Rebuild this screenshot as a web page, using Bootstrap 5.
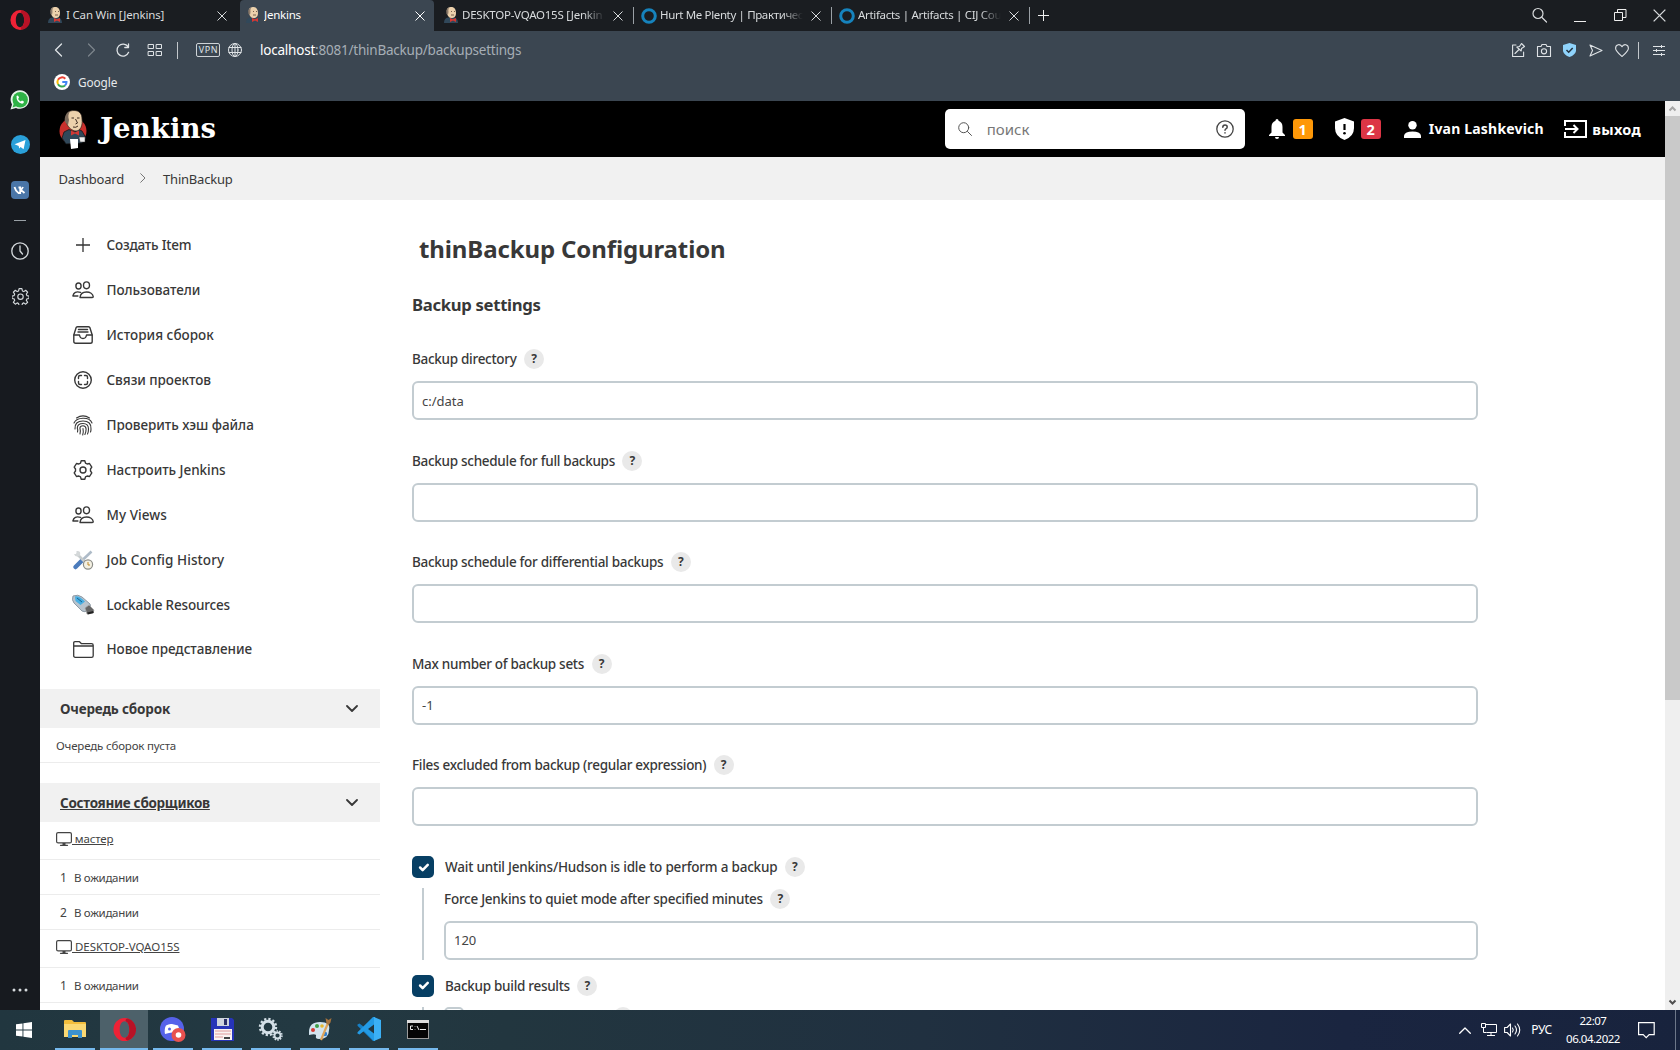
<!DOCTYPE html>
<html lang="ru">
<head>
<meta charset="utf-8">
<title>Jenkins</title>
<link rel="stylesheet" href="https://cdn.jsdelivr.net/npm/bootstrap@5.3.0/dist/css/bootstrap.min.css">
<script src="https://cdn.jsdelivr.net/npm/bootstrap@5.3.0/dist/js/bootstrap.bundle.min.js"></script>
<style>
html,body{height:1050px;overflow:hidden}
body{font-family:"Noto Sans","Open Sans",sans-serif;font-size:13.5px;line-height:20px;color:#383838;background:#fff;white-space:nowrap}
svg{display:block;flex:none;overflow:visible}
.ln{fill:none;stroke:currentColor;stroke-linecap:round;stroke-linejoin:round}
.desk{height:1010px}
/* Opera side panel */
.opera-rail{width:40px;background:#171a1f;color:#d5dadd}
.rail-ico{height:45px;display:flex;align-items:center;justify-content:center;flex:none}
.rail-ico.logo{height:39px;margin-bottom:38px}
.rail-ico.rule{height:16px}
.rail-ico.more{height:40px}
/* browser chrome */
.tabstrip{height:31px;background:#1a1d21;font-size:11.5px;letter-spacing:-.24px;color:#d8dbdd}
.btab{height:31px;position:relative}
.btab .cap{flex:1;overflow:hidden;min-width:0;padding-bottom:1px}
.btab.on{background:#3b4651;border-radius:4px 4px 0 0;color:#fff}
.btab.sep{border-right:1px solid #9aa0a5;height:17px}
.fade-end{-webkit-mask-image:linear-gradient(90deg,#000 85%,transparent)}
.addr{height:38px;background:#3b4651;color:#dfe3e6}
.addr .url{letter-spacing:-.22px;color:#a6aeb6}
.bmarks{height:32px;background:#3b4651;color:#e6e9eb;font-size:11.8px;letter-spacing:-.1px;padding:0 0 7px 14px}
.vbar{width:1px;height:17px;background:#c3c8cc}
.vpn{width:24px;height:14px;border:1px solid #ced3d7;border-radius:2px;font-size:9px;line-height:12px;letter-spacing:.6px;text-align:center;padding-left:1px}
/* Jenkins header */
.jhead{height:56px;background:#000;color:#fff;font-weight:700;font-size:14px}
.wordmark{font:700 27.5px/40px "DejaVu Serif",serif;letter-spacing:.1px;margin-left:13px;padding-bottom:3px}
.jsearch{width:300px;height:40px;border-radius:5px;background:#fff;color:#777;font-size:15px;font-weight:400;padding:0 11px 0 13px}
.count{width:20px;height:20px;border-radius:3px;font-size:14.5px;line-height:20px;text-align:center;font-weight:700}
.crumbs{height:43px;background:#f1f1f1;font-size:13px;letter-spacing:-.2px}
.sbar{width:15px;background:#efefef}
.sbar .knob{height:584px;background:#c9c9c9}
/* side column */
.side{width:340px;flex:none}
.tasks{padding:23px 0 0;height:489px}
.task{height:44.9px;font-weight:500;letter-spacing:-.05px;padding-left:32px}
.task .pic{width:22px;margin-right:12.5px;display:flex;justify-content:center}
.pane-h{height:39px;background:#f1f1f1;font-weight:700;padding:0 22px 0 20px;letter-spacing:-.18px}
.pane-r{border-bottom:1px solid #ececec;font-size:11.5px;letter-spacing:-.3px;padding:1px 0 0 16px;color:#444}
.pane-r.node{height:38px;padding-top:0;padding-bottom:3px}
.pane-r.slot{height:35px}
.pane-r.slot .num{width:18px;padding-left:4px;font-size:12px}
.pane-gap{height:20px}
/* settings form */
.form-area{padding:34px 187px 0 32px;flex:1;min-width:0}
.jtitle{font-size:24px;font-weight:700;line-height:30px;letter-spacing:-.12px;margin:0 0 0 7px}
.jsub{font-size:16.7px;font-weight:700;line-height:24px;letter-spacing:-.32px;margin:29px 0 32px}
.lbl{height:20px;font-weight:500;letter-spacing:-.29px}
.help{width:20px;height:20px;border-radius:50%;background:#e9e9e9;font-weight:700;font-size:12px;line-height:20px;text-align:center;margin-left:7.5px;flex:none;letter-spacing:0}
.form-control.jin{height:39px;border:2px solid #c3ccd1;border-radius:6px;padding:0 8px;font-size:13px;color:#444;margin-top:12.3px}
.grp{height:101.5px;flex:none}
.form-check-input.jck{width:22px;height:22px;margin:0 11px 0 0;border:0;border-radius:5px;background-color:#073f64;background-size:17px}
.form-check-input.jck:checked{background-color:#073f64;border:0}
.nest{border-left:2px solid #c3ccd1;margin:10px 0 0 10px;padding-left:20px}
/* Windows taskbar */
.winbar{height:40px;background:linear-gradient(90deg,#21363f 0,#233942 18%,#22363f 30%,#203040 55%,#1a2540 80%,#18233d);color:#fff}
.wcell{height:40px;display:flex;align-items:center;justify-content:center;flex:none}
.wbtn{width:40px;margin:0 4.5px;height:40px;border-bottom:2px solid #76b9ed;display:flex;align-items:center;justify-content:center;flex:none}
.clock{font-size:11.5px;line-height:18px;letter-spacing:-.5px;text-align:center;width:60px}
</style>
</head>
<body>
<svg width="0" height="0" class="position-absolute">
 <symbol id="butler" viewBox="0 0 28 39">
  <ellipse cx="14" cy="21" rx="13.500" ry="13" fill="#c9302c"/>
  <path d="M5 22 10 19.500 15 22 20 19.500 23 21 27 28 23 33 7 34 3 28Z" fill="#31485a" stroke="#111" stroke-width=".7"/>
  <path d="M7 9C6 3 10 .5 15 .5s8 3 8 8.500c1 7-2 12-6 12S9 17 8 14Z" fill="#ecd1ac" stroke="#29211c" stroke-width=".7"/>
  <path d="M6 12C5 7 7 3 11 1.200 9 4 9 7 10 10L9 15Z" fill="#7a6a5c"/>
  <path d="M12.500 8h2.500M18 8h2.500M16.500 9l2 4-2 1M14 17q3 1 5-1" stroke="#3d2c22" fill="none"/>
  <path d="m12 20.500 4 2 4-2v5l-4-2-4 2Z" fill="#d33833"/>
  <path d="M11 29h8v9l-7 1Z" fill="#fff"/><path d="M20 27h6v5h-5Z" fill="#eee" stroke="#333" stroke-width=".5"/>
 </symbol>
 <symbol id="jfav" viewBox="0 0 14 17">
  <path d="M0 16Q0 11 4 10.500L11 10.500Q14 12 14 16Z" fill="#31485a"/>
  <path d="M3 5C2 1 5 0 7.500 0S12 2 12 6 10 11 7.500 11 4 9 3 7Z" fill="#ecd1ac"/>
  <path d="M2.500 7Q1.500 2 5 .5 4 3 4.500 5L4 8Z" fill="#8b7a6a"/>
  <path d="M7 4.500h1M10 4.500h1M7 8h3" stroke="#5b4436" stroke-width=".8"/>
  <path d="m6 11 3 1.200L12 11v4L9 13.600 6 15Z" fill="#d33833"/>
 </symbol>
 <symbol id="xx" viewBox="0 0 10 10"><path d="M.5.5l9 9M9.500.5l-9 9" stroke="currentColor" fill="none"/></symbol>
 <symbol id="operao" viewBox="0 0 24 24"><path fill-rule="evenodd" d="M12 0a11.500 12 0 1 0 0 24 11.500 12 0 1 0 0-24Zm0 3.400c3.300 0 5 4 5 8.600s-1.700 8.600-5 8.600-5-4-5-8.600 1.700-8.600 5-8.600Z" fill="#ee2236"/><path d="M15.500.5A12 12 0 0 1 15.500 23.500Q12 23 13.500 20.400C16 19.500 17 16 17 12s-1-7.500-3.500-8.400Q12 1 15.500.5Z" fill="#b81226"/></symbol>
 <symbol id="ppl" viewBox="0 0 22 18"><g class="ln" stroke-width="1.400"><ellipse cx="6.500" cy="5" rx="2.600" ry="3"/><ellipse cx="14.500" cy="4.300" rx="3" ry="3.400"/><path d="M8 16.500c.300-3.500 3-5.500 6.500-5.500s6.400 2 6.700 4.500q.1 1-1 1ZM8.500 11.300Q2 9.500.9 15h5"/></g></symbol>
 <symbol id="chev" viewBox="0 0 12 7"><path class="ln" stroke-width="1.800" d="M1 1l5 5 5-5"/></symbol>
 <symbol id="mon" viewBox="0 0 16 14"><g class="ln" stroke="#555" stroke-width="1.200"><rect x=".6" y=".6" width="14.800" height="10.300" rx="1.500"/><path d="M4.500 13.300h7"/></g><rect x="6.500" y="11" width="3" height="2.500" fill="#444"/></symbol>
 <symbol id="gr" viewBox="0 0 24 24"><path class="ln" d="M10 1.500h4l.7 3.300 2 1 2.600-1.900 2.800 2.800-1.900 2.700.8 2 3 .6M10 1.500l-.7 3.300-2 1-2.600-1.900-2.800 2.800 1.900 2.700-.8 2-3 .6v3.500l3 .6.8 2-1.900 2.700 2.800 2.800 2.600-1.900 2 1 .7 3h4l.7-3 2-1 2.600 1.900 2.800-2.800-1.900-2.700.8-2 3-.6V12" stroke-width="1.600"/><circle cx="12" cy="13" r="3.800" class="ln" stroke-width="1.600"/></symbol>
</svg>

<div class="desk d-flex">
 <aside class="opera-rail d-flex flex-column flex-shrink-0">
  <div class="rail-ico logo"><svg width="20" height="20"><use href="#operao"/></svg></div>
  <div class="rail-ico"><svg width="20" height="20" viewBox="0 0 20 20"><path d="M.5 19.500 2 14.500A9.300 9.300 0 1 1 6 18Z" fill="#e8f3ea"/><circle cx="10.200" cy="9.800" r="7.700" fill="#2fb246"/><path d="M2.500 17.500 4 13l3 3Z" fill="#2fb246"/><path d="M6.500 6q1-1.200 1.800 0l.7 1.600-.9 1.300q.9 1.700 2.700 2.500l1.200-1 1.900 1q.3 2-1.800 2.300Q6.200 12.500 6.500 6Z" fill="#fff"/></svg></div>
  <div class="rail-ico"><svg width="19" height="19" viewBox="0 0 19 19"><circle cx="9.500" cy="9.500" r="9.500" fill="#2aa0d9"/><path d="M3.500 9.300 14.500 5l-1.900 9.300-3-2.200-1.500 1.500-.4-2.700Z" fill="#fff"/></svg></div>
  <div class="rail-ico"><svg width="18" height="18" viewBox="0 0 18 18"><rect width="18" height="18" rx="4" fill="#4a76a8"/><path d="M3.500 6q1 4 4 6h1.700V6.500H7.500M9 9q2-.5 3-3M9.500 9q2 1 4 3" fill="none" stroke="#fff" stroke-width="1.800"/></svg></div>
  <div class="rail-ico rule"><svg width="12" height="1"><rect width="12" height="1" fill="#9aa1a6"/></svg></div>
  <div class="rail-ico"><svg width="18" height="18" viewBox="0 0 18 18" class="ln" stroke-width="1.300"><circle cx="9" cy="9" r="8.200"/><path d="M9 4v5l2.500 3"/></svg></div>
  <div class="rail-ico"><svg width="17" height="18"><use href="#gr"/></svg></div>
  <div class="rail-ico more mt-auto"><svg width="16" height="4" fill="currentColor"><circle cx="2" cy="2" r="1.500"/><circle cx="8" cy="2" r="1.500"/><circle cx="14" cy="2" r="1.500"/></svg></div>
 </aside>

 <div class="d-flex flex-column flex-grow-1" style="min-width:0">
  <div class="tabstrip d-flex align-items-center flex-shrink-0">
   <div class="btab d-flex align-items-center" style="width:200px;padding:0 13px 0 8px"><svg width="14" height="17" class="me-1"><use href="#jfav"/></svg><span class="cap" style="letter-spacing:-.18px">I Can Win [Jenkins]</span><svg width="10" height="10"><use href="#xx"/></svg></div>
   <div class="btab on d-flex align-items-center" style="width:194px;padding:0 9px 0 6px"><svg width="14" height="17" class="me-1"><use href="#jfav"/></svg><span class="cap">Jenkins</span><svg width="10" height="10"><use href="#xx"/></svg></div>
   <div class="btab sep d-flex align-items-center" style="width:200px;padding:0 10px 0 10px"><svg width="14" height="17" class="me-1"><use href="#jfav"/></svg><span class="cap fade-end me-2">DESKTOP-VQAO15S [Jenkin</span><svg width="10" height="10"><use href="#xx"/></svg></div>
   <div class="btab sep d-flex align-items-center" style="width:198px;padding:0 10px 0 7px"><svg width="16" height="16" class="me-1"><circle cx="8" cy="8" r="6.300" fill="none" stroke="#1683bd" stroke-width="3"/></svg><span class="cap fade-end me-2" style="margin-left:-1px;letter-spacing:-.36px">Hurt Me Plenty | Практичес</span><svg width="10" height="10"><use href="#xx"/></svg></div>
   <div class="btab sep d-flex align-items-center" style="width:198px;padding:0 10px 0 7px"><svg width="16" height="16" class="me-1"><circle cx="8" cy="8" r="6.300" fill="none" stroke="#1683bd" stroke-width="3"/></svg><span class="cap fade-end me-2" style="margin-left:-1px;letter-spacing:-.31px">Artifacts | Artifacts | CIJ Cou</span><svg width="10" height="10"><use href="#xx"/></svg></div>
   <svg width="11" height="11" class="ms-2"><path d="M5.500 0v11M0 5.500h11" stroke="#eee"/></svg>
   <div class="ms-auto d-flex align-items-center" style="padding-right:14px;gap:26px">
    <svg width="15" height="15" class="ln" stroke-width="1.200"><circle cx="6" cy="5.500" r="5"/><path d="M10 9.500l4.500 4.500"/></svg>
    <svg width="12" height="12" style="margin-left:1px"><path d="M0 11.500h12" stroke="#eee"/></svg>
    <svg width="13" height="13" fill="none" stroke="#eee" style="margin-left:2px"><path d="M.5 3.500h8v8h-8ZM3.500 3.500v-3h8.500v8h-3.500"/></svg>
    <svg width="13" height="13"><use href="#xx"/></svg>
   </div>
  </div>
  <div class="addr d-flex align-items-center flex-shrink-0">
   <svg width="9" height="14" class="ln" stroke-width="1.300" style="margin-left:14px"><path d="M7.500 1 1.500 7l6 6"/></svg>
   <svg width="9" height="14" class="ln" stroke-width="1.200" style="margin-left:24px;opacity:.4"><path d="M1.500 1l6 6-6 6"/></svg>
   <svg width="14" height="14" class="ln" stroke-width="1.300" style="margin-left:20px"><path d="M12.600 9.300A6 6 0 1 1 12 3.700M12.500.8v3.700H8.800"/></svg>
   <svg width="14" height="12" class="ln" style="margin-left:18px"><path d="M.5.5h5v4h-5ZM8.500.5h5v4h-5ZM.5 7.500h5v4h-5ZM8.500 7.500h5v4h-5Z"/></svg>
   <div class="vbar" style="margin-left:15px"></div>
   <div class="vpn" style="margin-left:18px">VPN</div>
   <svg width="14" height="14" class="ln" style="margin-left:8px"><circle cx="7" cy="7" r="6.500"/><ellipse cx="7" cy="7" rx="3" ry="6.500"/><path d="M1 4.500h12M1 9.500h12M7 .5v13"/></svg>
   <div class="url" style="margin-left:18px"><span class="text-white">localhost</span>:8081/thinBackup/backupsettings</div>
   <div class="ms-auto d-flex align-items-center" style="padding-right:15px">
    <svg width="13" height="14" class="ln" stroke-width="1.100"><path d="M4 2H.6v11.500h11V9M7.500 3.500l2-3 3 3-3 2-.3 2.500L4.800 4ZM7 6.500l-4 4"/></svg>
    <svg width="14" height="13" class="ln" stroke-width="1.100" style="margin-left:12px"><path d="M.5 2.500h3.500l1-2h4l1 2h3.500v10H.5Z"/><circle cx="7" cy="7.300" r="2.600"/></svg>
    <svg width="13" height="14" style="margin-left:12px"><path d="M6.500 0 13 2v6q-1 4-6.500 6Q1 12 0 8V2Z" fill="#8fd3fb"/><path d="M3.500 7l2.200 2.200L9.700 5" stroke="#243240" stroke-width="1.500" fill="none"/></svg>
    <svg width="14" height="13" class="ln" stroke-width="1.100" style="margin-left:13px"><path d="M1 1l12 5.500L1 12l2.500-5.500Z"/></svg>
    <svg width="14" height="13" class="ln" stroke-width="1.100" style="margin-left:12px"><path d="M7 12.500C3 9 .6 7 .6 4.200.6 0 5.500-.5 7 2.800 8.500-.5 13.400 0 13.400 4.200 13.400 7 11 9 7 12.500Z"/></svg>
    <div class="vbar" style="margin-left:9px"></div>
    <svg width="12" height="11" stroke="currentColor" fill="none" style="margin-left:14px"><path d="M0 1.500h12M0 5.500h12M0 9.500h12M8.500 0v3M3.500 4v3M8.500 8v3"/></svg>
   </div>
  </div>
  <div class="bmarks d-flex align-items-center flex-shrink-0">
   <svg width="16" height="16" viewBox="0 0 16 16"><circle cx="8" cy="8" r="8" fill="#fff"/><g fill="none" stroke-width="2"><path d="M11.300 4.700A4.600 4.600 0 0 0 4 5.800" stroke="#ea4335"/><path d="M4 5.800a4.600 4.600 0 0 0 0 4.400" stroke="#fbbc05"/><path d="M4 10.200a4.600 4.600 0 0 0 7 1.300" stroke="#34a853"/><path d="M11 11.500Q12.600 10 12.500 8H8.300" stroke="#4285f4"/></g></svg>
   <span style="margin-left:8px">Google</span>
  </div>

  <div class="d-flex flex-grow-1" style="min-height:0">
   <div class="d-flex flex-column flex-grow-1 overflow-hidden bg-white">
    <header class="jhead d-flex align-items-center flex-shrink-0">
     <svg width="28" height="39" style="margin-left:19px"><use href="#butler"/></svg>
     <div class="wordmark">Jenkins</div>
     <div class="jsearch ms-auto d-flex align-items-center">
      <svg width="14" height="14" class="ln"><g stroke="#555"><circle cx="5.700" cy="5.700" r="5"/><path d="M9.500 9.500l4 4"/></g></svg>
      <span style="margin-left:15px">поиск</span>
      <svg width="18" height="18" class="ms-auto ln"><g stroke="#444"><circle cx="9" cy="9" r="8.200" stroke-width="1.300"/><path d="M6.800 7.200q0-2.300 2.200-2.300t2.200 2q0 1.200-1.300 1.900-.9.500-.9 1.500M9 12.700v.3" stroke-width="1.500"/></g></svg>
     </div>
     <svg width="16" height="20" viewBox="0 0 16 20" fill="#fff" style="margin-left:24px"><path d="M8 0a1.600 1.600 0 0 1 1.500 1.700Q13.500 3 13.500 8v5.500L16 16v1H0v-1l2.500-2.500V8Q2.500 3 6.500 1.700A1.600 1.600 0 0 1 8 0ZM6 18h4a2 2 0 0 1-4 0Z"/></svg>
     <div class="count" style="margin-left:8px;background:#fe9808">1</div>
     <svg width="19" height="22" viewBox="0 0 19 22" style="margin-left:22px"><path d="M9.500 0 19 3.500V10q0 8.500-9.500 12Q0 18.500 0 10V3.500Z" fill="#fff"/><path d="M9.500 6v6" stroke="#000" stroke-width="2.200"/><circle cx="9.500" cy="15.200" r="1.300"/></svg>
     <div class="count" style="margin-left:7px;background:#dc3545">2</div>
     <svg width="17" height="17" viewBox="0 0 17 17" fill="#fff" style="margin-left:23px"><circle cx="8.500" cy="4.200" r="4.200"/><path d="M0 17v-2.500Q1 10.500 8.500 10.500T17 14.500V17Z"/></svg>
     <span style="margin-left:8px;letter-spacing:.19px">Ivan Lashkevich</span>
     <svg width="23" height="18" viewBox="0 0 23 18" fill="none" stroke="#fff" stroke-width="2" style="margin-left:20px"><path d="M1 6V1h21v16H1v-5M1 9h12M9.500 5l4 4-4 4"/></svg>
     <span style="margin:0 24px 0 5.500px;font-size:14.5px;letter-spacing:.3px">выход</span>
    </header>
    <nav class="crumbs d-flex align-items-center flex-shrink-0">
     <span style="margin-left:18.500px">Dashboard</span>
     <svg width="6" height="10" class="ln" style="margin:0 17px 2px 16px"><path d="M.7.7 5 5 .7 9.300" stroke="#777"/></svg>
     <span>ThinBackup</span>
    </nav>
    <div class="d-flex flex-grow-1" style="min-height:0">
     <div class="side">
      <div class="tasks">
       <div class="task d-flex align-items-center"><span class="pic"><svg width="14" height="14"><path d="M7 0v14M0 7h14" stroke="#333" stroke-width="1.300"/></svg></span><span style="letter-spacing:-.2px">Создать Item</span></div>
       <div class="task d-flex align-items-center"><span class="pic"><svg width="22" height="18"><use href="#ppl"/></svg></span>Пользователи</div>
       <div class="task d-flex align-items-center"><span class="pic"><svg width="20" height="18" class="ln" stroke-width="1.400"><path d="M.8 9 3 2Q3.200.7 4.500.7h11Q16.800.7 17 2l2.200 7v6.500q0 1.800-1.800 1.800H2.600Q.8 17.300.8 15.500Z"/><path d="M1 9h5.500q.5 3.500 3.500 3.500T13.500 9H19M5.500 3.500h9M5 6h10"/></svg></span><span style="letter-spacing:.03px">История сборок</span></div>
       <div class="task d-flex align-items-center"><span class="pic"><svg width="18" height="18" class="ln" stroke-width="1.400"><circle cx="9" cy="9" r="8.300"/><path d="M4.500 7.500V6q0-1.500 1.500-1.500h1.500M10.500 4.500H12q1.500 0 1.500 1.500v1.500M13.500 10.500V12q0 1.500-1.500 1.500h-1.500M7.500 13.500H6q-1.500 0-1.500-1.500v-1.500"/></svg></span>Связи проектов</div>
       <div class="task d-flex align-items-center"><span class="pic"><svg width="20" height="21" class="ln" stroke-width="1.100"><path d="M3.500 3Q10-1.200 16.500 3M1 8Q3 3.500 10 3.300T19 8M2 14Q1.500 6 10 6t8 8q0 2-.5 3M4.500 17q.6-2-.2-4Q4.500 8.500 10 8.500t5.500 5.500q0 3-1 5M7 19q.8-3-.1-6 .3-2.200 3.100-2.200t3.100 3.200q0 3-1.200 5.500M9.700 20q1-3 .3-6.500"/></svg></span>Проверить хэш файла</div>
       <div class="task d-flex align-items-center"><span class="pic"><svg width="20" height="20" viewBox="0 0 20 20" class="ln" stroke-width="1.400"><path d="M8.200.8h3.600l.7 2.300 1.600.9 2.400-.5 2.300 3.700L17.500 9v2l1.300 1.800-2.300 3.700-2.400-.5-1.600.9-.7 2.300H8.200l-.7-2.300-1.600-.9-2.400.5-2.300-3.700L2.500 11V9L1.200 7.200l2.300-3.700 2.400.5 1.600-.9Z"/><circle cx="10" cy="10" r="3"/></svg></span>Настроить Jenkins</div>
       <div class="task d-flex align-items-center"><span class="pic"><svg width="22" height="18"><use href="#ppl"/></svg></span><span style="letter-spacing:.05px">My Views</span></div>
       <div class="task d-flex align-items-center"><span class="pic"><svg width="20" height="20"><path d="M18.500 1.500 8 11.500" stroke="#aebbc8" stroke-width="2.600"/><path d="M9 10.500 2.500 17" stroke="#4c7cbc" stroke-width="4.500" stroke-linecap="round"/><path d="M3.500 3.500 12 12" stroke="#c6cbcc" stroke-width="2.600"/><path d="M3.500 1v3H1Q2 7 5 6.500T7 2Q5.500.5 3.500 1Z" fill="#d4d8d9"/><circle cx="15" cy="14.500" r="4.600" fill="#f3f0e2" stroke="#8c8d88" stroke-width="1.200"/><path d="M15 12v3h2" stroke="#c08a2a" fill="none"/></svg></span><span style="letter-spacing:.08px">Job Config History</span></div>
       <div class="task d-flex align-items-center"><span class="pic"><svg width="22" height="20"><path d="M1 1Q6-1 10 2l8 7q2 3-2 6-3 3-6 1L2 8Q-.5 5 1 1Z" fill="#b8c4ce" stroke="#8e9aa5"/><path d="M3 1.500Q7 .5 13 6.500L8.500 10 3.500 6Z" fill="#47aee2"/><path d="m5 3 5 4" stroke="#17618f"/><path d="m13 13 4-3 5 5-1 3-6 1Z" fill="#666" stroke="#aaa" stroke-width=".7"/><path d="m15.500 18.500 6-1.500" stroke="#222" stroke-width="2"/></svg></span><span style="letter-spacing:-.17px">Lockable Resources</span></div>
       <div class="task d-flex align-items-center"><span class="pic"><svg width="21" height="17" class="ln" stroke-width="1.300"><path d="M.7 5V2Q.7.700 2 .700h4.500l2 2h10q1.700 0 1.700 1.600v10.400q0 1.600-1.600 1.600H2.300q-1.600 0-1.600-1.600ZM.7 5h19.500"/></svg></span>Новое представление</div>
      </div>
      <div class="pane-h d-flex align-items-center"><span>Очередь сборок</span><svg width="12" height="7" class="ms-auto"><use href="#chev"/></svg></div>
      <div class="pane-r slot d-flex align-items-center" style="letter-spacing:-.17px">Очередь сборок пуста</div>
      <div class="pane-gap"></div>
      <div class="pane-h d-flex align-items-center"><span class="text-decoration-underline" style="letter-spacing:-.3px">Состояние сборщиков</span><svg width="12" height="7" class="ms-auto"><use href="#chev"/></svg></div>
      <div class="pane-r node d-flex align-items-center"><svg width="16" height="14"><use href="#mon"/></svg><u style="white-space:pre;letter-spacing:-.15px"> мастер</u></div>
      <div class="pane-r slot d-flex align-items-center"><span class="num">1</span>В ожидании</div>
      <div class="pane-r slot d-flex align-items-center"><span class="num">2</span>В ожидании</div>
      <div class="pane-r node d-flex align-items-center"><svg width="16" height="14"><use href="#mon"/></svg><u style="white-space:pre;letter-spacing:-.04px"> DESKTOP-VQAO15S</u></div>
      <div class="pane-r slot d-flex align-items-center"><span class="num">1</span>В ожидании</div>
     </div>
     <main class="form-area">
      <h1 class="jtitle">thinBackup Configuration</h1>
      <h2 class="jsub">Backup settings</h2>
      <div class="grp"><div class="lbl d-flex align-items-center">Backup directory<span class="help">?</span></div><input class="form-control jin" value="c:/data"></div>
      <div class="grp"><div class="lbl d-flex align-items-center">Backup schedule for full backups<span class="help">?</span></div><input class="form-control jin"></div>
      <div class="grp"><div class="lbl d-flex align-items-center">Backup schedule for differential backups<span class="help">?</span></div><input class="form-control jin"></div>
      <div class="grp"><div class="lbl d-flex align-items-center">Max number of backup sets<span class="help">?</span></div><input class="form-control jin" value="-1"></div>
      <div class="grp"><div class="lbl d-flex align-items-center">Files excluded from backup (regular expression)<span class="help">?</span></div><input class="form-control jin"></div>
      <div class="lbl d-flex align-items-center" style="height:21px;letter-spacing:-.21px"><input type="checkbox" class="form-check-input jck" checked>Wait until Jenkins/Hudson is idle to perform a backup<span class="help">?</span></div>
      <div class="nest" style="height:72px"><div class="lbl d-flex align-items-center" style="padding-top:1px;height:21px;letter-spacing:-.25px">Force Jenkins to quiet mode after specified minutes<span class="help">?</span></div><input class="form-control jin" value="120"></div>
      <div class="lbl d-flex align-items-center" style="height:22px;margin-top:15px"><input type="checkbox" class="form-check-input jck" checked>Backup build results<span class="help">?</span></div>
      <div class="nest d-flex" style="height:30px"><span style="width:20px;height:20px;border:2px solid #c3ccd1;border-radius:5px"></span><span class="help" style="margin-left:149px"></span></div>
     </main>
    </div>
   </div>
   <div class="sbar d-flex flex-column flex-shrink-0">
    <div class="d-flex align-items-center justify-content-center" style="height:15px;color:#a5a5a5"><svg width="7" height="5"><path d="M.5 4.500l3-3 3 3" fill="none" stroke="currentColor" stroke-width="2"/></svg></div>
    <div class="knob"></div>
    <div class="mt-auto d-flex align-items-center justify-content-center" style="height:15px;color:#505050"><svg width="7" height="5"><path d="M.5.5l3 3 3-3" fill="none" stroke="currentColor" stroke-width="2"/></svg></div>
   </div>
  </div>
 </div>
</div>

<footer class="winbar d-flex">
 <div class="wcell" style="width:48px"><svg width="16" height="16" viewBox="0 0 16 16" fill="#fff"><path d="M0 2.300 6.500 1.400v6.100H0ZM7.400 1.300 16 0v7.500H7.400ZM0 8.400h6.500v6.200L0 13.700ZM7.400 8.400H16V16l-8.600-1.200Z"/></svg></div>
 <div class="wbtn" style="margin-left:7px;margin-right:5px"><svg width="22" height="18"><path d="M0 1Q0 0 1 0h7l2 2h11q1 0 1 1v14H0Z" fill="#f3bd3c"/><path d="M0 4h22v13H0Z" fill="#fbd873"/><path d="M4 18v-7q0-1 1-1h12q1 0 1 1v7h-4v-3H8v3Z" fill="#3d92d0"/></svg></div>
 <div class="wcell" style="width:48px;background:#4d616a;border-bottom:2px solid #76b9ed"><svg width="23" height="23"><use href="#operao"/></svg></div>
 <div class="wbtn" style="margin-left:5px"><svg width="26" height="25" viewBox="0 0 26 25"><circle cx="12" cy="12" r="12" fill="#5662ea"/><path d="M6 8.500Q9 6.500 12 7t6 1.500q2 3 1.500 8-5-1-7.500-1t-7 1.500Q4 12 6 8.500Z" fill="#fff"/><circle cx="9.500" cy="12" r="1.500" fill="#5662ea"/><circle cx="18.500" cy="18" r="7" fill="#e8514f"/><circle cx="18.500" cy="18" r="2.800" fill="#fff"/></svg></div>
 <div class="wbtn"><svg width="23" height="23"><path d="M0 0h21l2 2v21H0Z" fill="#2734b8"/><path d="M6 0h12v8H6Z" fill="#cfd4de"/><path d="M13 1h3v6h-3Z" fill="#2a2f68"/><path d="M3 11h18v11H3Z" fill="#fbf3f1"/><path d="M4 13h16M4 16h16M4 19h8" stroke="#e09a9b"/><path d="M13 19h6v2h-6" fill="#444"/></svg></div>
 <div class="wbtn"><svg width="24" height="23"><circle cx="9" cy="9" r="5.800" fill="none" stroke="#d5e0e8" stroke-width="3"/><circle cx="9" cy="9" r="8" fill="none" stroke="#d5e0e8" stroke-width="2.400" stroke-dasharray="2.200 2"/><circle cx="18.500" cy="17.500" r="3" fill="none" stroke="#d5e0e8" stroke-width="1.800"/><circle cx="18.500" cy="17.500" r="4.500" fill="none" stroke="#d5e0e8" stroke-width="1.500" stroke-dasharray="1.500 1.300"/></svg></div>
 <div class="wbtn"><svg width="24" height="24"><path d="M1 15Q1 5 12 5t9 8q0 9-10 9-4 0-3-3T1 18Z" fill="#d3e4ef"/><circle cx="5" cy="13" r="2" fill="#d43a32"/><circle cx="9" cy="9" r="2" fill="#3f9f49"/><circle cx="14" cy="9" r="1.800" fill="#e6b82e"/><circle cx="17" cy="17" r="2.200" fill="#2f7fcf"/><path d="M13 23 20 6" stroke="#dfa45a" stroke-width="2.200"/><path d="M18.500 6.500 17.500 1l3 2 3-2-1 4.500-2 2.500Z" fill="#a8733d"/></svg></div>
 <div class="wbtn"><svg width="24" height="24" viewBox="0 0 24 24"><path d="M17 0 7 10 2.500 6.500.5 7.500v1.200L16 24h2Z" fill="#1680c7"/><path d="M17 24 7 14l-4.500 3.500-2-1v-1.200L16 0h2Z" fill="#239be5"/><path d="m17 0 7 3v18l-7 3Z" fill="#3bb0f5"/><path d="M17 7.500v9L11 12Z" fill="#22363f"/></svg></div>
 <div class="wbtn"><svg width="22" height="19"><path d="M0 0h22v19H0Z" fill="#9b9b9b"/><path d="M1 3h20v15H1Z" fill="#050505"/><path d="M0 0h22v3H0Z" fill="#dedede"/><path d="M6 6H3.500v3.500H6M8 6.500v.5M8 9v.5M10 6l2 4M13 9.500h6" stroke="#eee" fill="none"/></svg></div>
 <div class="ms-auto d-flex align-items-center">
  <svg width="12" height="7" class="ln" stroke-width="1.300"><path d="M.7 6.300 6 1l5.300 5.300"/></svg>
  <svg width="16" height="14" fill="none" stroke="#fff" style="margin-left:10px"><path d="M5 1.500h10.500v8H5.500M10 9.500v3M6 12.500h8M.5.500h4v4h-4ZM2.500 4.500v5h3"/></svg>
  <svg width="17" height="14" class="ln" stroke-width="1.100" style="margin-left:7px"><path d="M.6 4.500h2.500L6.500 1v12L3.100 9.500H.6ZM8.500 5q1.500 2 0 4M11 3q3 4 0 8M13.500 1q4.500 6 0 12"/></svg>
  <span style="margin-left:10px;font-size:12px;letter-spacing:-.3px">РУС</span>
  <div class="clock" style="margin-left:11px">22:07<br>06.04.2022</div>
  <svg width="17" height="16" fill="none" stroke="#fff" stroke-width="1.200" style="margin-left:15px"><path d="M.6.6h15.600v12h-5l-3 3-3-3H.6Z"/></svg>
  <div style="width:1px;height:40px;background:#6d7789;margin:0 4px 0 20px"></div>
 </div>
</footer>
</body>
</html>
